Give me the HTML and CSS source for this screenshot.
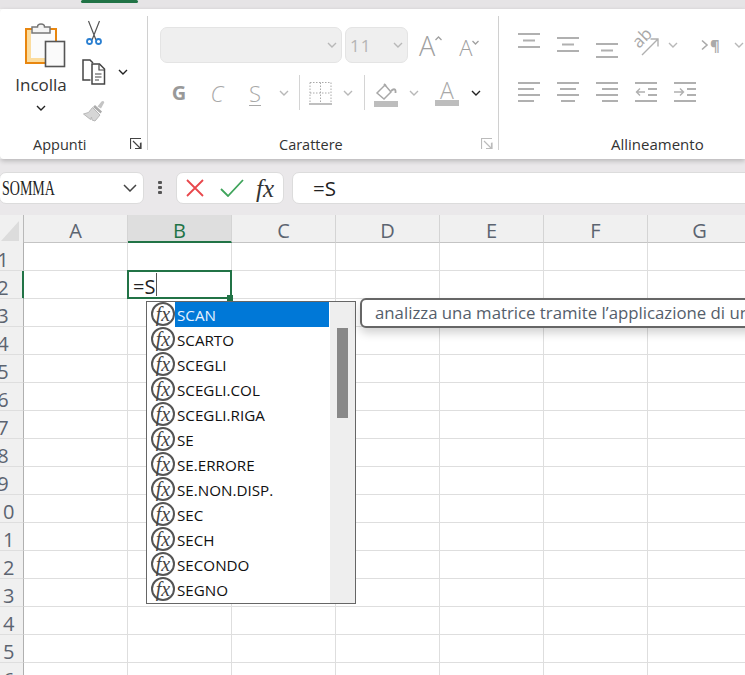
FILE: index.html
```html
<!DOCTYPE html>
<html lang="it">
<head>
  <meta charset="UTF-8" />
  <title>Excel - completamento formula</title>
  <link rel="stylesheet" href="styles.css">
</head>
<body>
  <svg class="defs" width="0" height="0">
    <symbol id="chev" viewBox="0 0 10 6"><path d="M1 1l4 4 4-4" fill="none" stroke="currentColor" stroke-width="1.4"/></symbol>
    <symbol id="launcher" viewBox="0 0 12 12"><path d="M.5 11V.5H11M3 3l7 7M5 10.5h6v-6M10.5 5v6" fill="none" stroke="currentColor" stroke-width="1.2"/></symbol>
  </svg>

  <div class="topband"><span class="tab-mark"></span></div>

  <section class="ribbon">
    <!-- Appunti -->
    <div class="group group-clip">
      <div class="group-body clip-body">
        <div class="paste">
          <svg class="paste-icon" width="44" height="48" viewBox="0 0 44 48">
            <rect x="3" y="9" width="30" height="34" fill="#fbfbfb" stroke="#e8860f" stroke-width="2"/>
            <rect x="4" y="10" width="4" height="32" fill="#fbdc9e"/>
            <rect x="4" y="38" width="20" height="4" fill="#fbdc9e"/>
            <path d="M9 13V7h5.500c0-4 7-4 7 0H27v6z" fill="#f4f4f4" stroke="#777" stroke-width="1.500"/>
            <rect x="22.500" y="21.500" width="19" height="25" fill="#fafafa" stroke="#555" stroke-width="1.600"/>
          </svg>
          <span class="paste-label">Incolla</span>
          <svg class="chev-svg dark" width="10" height="6"><use href="#chev"/></svg>
        </div>
        <div class="clip-tools">
          <svg width="24" height="26" viewBox="0 0 24 26">
            <path d="M6.500 1l7.500 19M17.500 1L10 20" fill="none" stroke="#555" stroke-width="1.200"/>
            <circle cx="7.500" cy="21.500" r="2.500" fill="#fff" stroke="#2a7fd1" stroke-width="1.800"/>
            <circle cx="16.500" cy="21.500" r="2.500" fill="#fff" stroke="#2a7fd1" stroke-width="1.800"/>
          </svg>
          <div class="copy-row">
            <svg width="24" height="26" viewBox="0 0 24 26">
              <path d="M8.500 21H1V1h7l3 3" fill="none" stroke="#444" stroke-width="1.500"/>
              <path d="M10 5h7.500l5 5v15H10z" fill="#fff" stroke="#444" stroke-width="1.500"/>
              <path d="M17 5.500V11h5M13 15h6.500M13 18h6.500M13 21h4" fill="none" stroke="#444" stroke-width="1.200"/>
            </svg>
            <svg class="chev-svg dark copy-chev" width="10" height="6"><use href="#chev"/></svg>
          </div>
          <svg width="24" height="26" viewBox="0 0 24 26">
            <path d="M15.500 8.500l4-5c1.500-1.500 3.500 0 2.500 1.500l-3 5.500z" fill="#c4c4c4"/>
            <path d="M13 7l7 6.500-1.500 2L11 9z" fill="#ababab"/>
            <path d="M10.500 9.500l7.500 7.500-5 6-3-1-.5-3-1 2.500-7-5.500 5-1.500z" fill="#d6d6d6" stroke="#b8b8b8"/>
          </svg>
        </div>
      </div>
      <div class="foot foot-clip">
        <span>Appunti</span>
        <svg class="launch" width="12" height="12"><use href="#launcher"/></svg>
      </div>
    </div>

    <!-- Carattere -->
    <div class="group group-font">
      <div class="group-body">
        <div class="font-row">
          <div class="select font-name"><svg class="chev-svg" width="10" height="6"><use href="#chev"/></svg></div>
          <div class="select font-size"><span>11</span><svg class="chev-svg" width="10" height="6"><use href="#chev"/></svg></div>
          <span class="grow big">A<svg width="7" height="5" viewBox="0 0 7 5"><path d="M.5 4l3-3 3 3" fill="none" stroke="currentColor" stroke-width="1.300"/></svg></span>
          <span class="grow small">A<svg width="7" height="5" viewBox="0 0 7 5"><path d="M.5 1l3 3 3-3" fill="none" stroke="currentColor" stroke-width="1.300"/></svg></span>
        </div>
        <div class="fmt-row">
          <span class="fmt bold">G</span>
          <span class="fmt italic">C</span>
          <span class="fmt under">S</span>
          <span class="chev-cell w20"><svg class="chev-svg" width="10" height="6"><use href="#chev"/></svg></span>
          <span class="vline first"></span>
          <svg class="border-icon" width="23" height="24" viewBox="0 0 23 24">
            <path d="M1 1.500h21M1 12h21M1 1.500v20M11.500 1.500v20M22 1.500v20" fill="none" stroke="#aaa" stroke-dasharray="1.500 1.500"/>
            <path d="M0 23h23" stroke="#aaa" stroke-width="1.600"/>
          </svg>
          <span class="chev-cell w32"><svg class="chev-svg" width="10" height="6"><use href="#chev"/></svg></span>
          <span class="vline"></span>
          <svg class="fill-icon" width="24" height="26" viewBox="0 0 24 26">
            <path d="M3 12l8-8 6 7-7 7z" fill="#fff" stroke="#a8a8a8" stroke-width="1.500"/>
            <path d="M10 3l2 2M17 10c3-3 5-2 4.500 2" fill="none" stroke="#a8a8a8" stroke-width="1.800"/>
            <rect y="20" width="24" height="6" fill="#bdbdbd"/>
          </svg>
          <span class="chev-cell w32"><svg class="chev-svg" width="10" height="6"><use href="#chev"/></svg></span>
          <span class="font-color"><span>A</span><i></i></span>
          <span class="chev-cell w34 dark"><svg class="chev-svg" width="10" height="6"><use href="#chev"/></svg></span>
        </div>
      </div>
      <div class="foot foot-font">
        <span>Carattere</span>
        <svg class="launch off" width="12" height="12"><use href="#launcher"/></svg>
      </div>
    </div>

    <!-- Allineamento -->
    <div class="group group-align">
      <div class="group-body">
        <div class="align-row top">
          <svg width="22" height="30" viewBox="0 0 22 30"><path d="M0 4h22M5 10.500h12M0 17h22" class="ln"/></svg>
          <svg width="22" height="30" viewBox="0 0 22 30"><path d="M0 8h22M5 14.500h12M0 21h22" class="ln"/></svg>
          <svg width="22" height="30" viewBox="0 0 22 30"><path d="M0 14h22M5 20.500h12M0 27h22" class="ln"/></svg>
          <svg class="orient" width="25" height="30" viewBox="0 0 25 30">
            <text x="5" y="19" transform="rotate(-45 5 19)" class="ab">ab</text>
            <path d="M8 25L24 9M16.500 9h7.500v7.500" class="ln thin"/>
          </svg>
          <span class="chev-cell w28"><svg class="chev-svg" width="10" height="6"><use href="#chev"/></svg></span>
          <svg class="pilcrow" width="22" height="30" viewBox="0 0 22 30">
            <path d="M1 10.500l5 4.500-5 4.500" fill="none" stroke="#aaa" stroke-width="1.600"/>
            <text x="9" y="21" class="para">¶</text>
          </svg>
          <span class="chev-cell w32"><svg class="chev-svg" width="10" height="6"><use href="#chev"/></svg></span>
        </div>
        <div class="align-row bottom">
          <svg width="22" height="35" viewBox="0 0 22 35"><path d="M0 8h22M0 14h16M0 20h22M0 26h16" class="ln"/></svg>
          <svg width="22" height="35" viewBox="0 0 22 35"><path d="M0 8h22M3 14h16M0 20h22M4 26h14" class="ln"/></svg>
          <svg width="22" height="35" viewBox="0 0 22 35"><path d="M0 8h22M6 14h16M0 20h22M6 26h16" class="ln"/></svg>
          <svg class="outdent" width="22" height="35" viewBox="0 0 22 35"><path d="M0 8h22M13 14h9M13 20h9M0 26h22" class="ln"/><path d="M10 17H1M5 13.500L1.500 17 5 20.500" class="ln thin"/></svg>
          <svg class="indent" width="22" height="35" viewBox="0 0 22 35"><path d="M0 8h22M13 14h9M13 20h9M0 26h22" class="ln"/><path d="M0 17h9M6 13.500L9.500 17 6 20.500" class="ln thin"/></svg>
        </div>
      </div>
      <div class="foot foot-align"><span>Allineamento</span></div>
    </div>
  </section>

  <section class="formula-bar">
    <div class="box name-box">
      <span class="name">SOMMA</span>
      <svg class="name-chev" width="14" height="8" viewBox="0 0 14 8"><path d="M1 1l6 6 6-6" fill="none" stroke="#444" stroke-width="1.500"/></svg>
    </div>
    <div class="dots"><i></i><i></i><i></i></div>
    <div class="box actions">
      <svg width="18" height="18" viewBox="0 0 18 18"><path d="M1 1l16 16M17 1L1 17" stroke="#e8474c" stroke-width="1.800"/></svg>
      <svg class="ok" width="24" height="18" viewBox="0 0 24 18"><path d="M1 10l7 7L23 1" fill="none" stroke="#3fa45b" stroke-width="1.800"/></svg>
      <span class="fx-btn">fx</span>
    </div>
    <div class="box formula-input">=S</div>
  </section>

  <section class="sheet">
    <div class="col-heads">
      <div class="corner"><svg width="20" height="22" viewBox="0 0 20 22"><path d="M19 1v20H1z" fill="#dcdcdc"/></svg></div>
      <div class="col">A</div>
      <div class="col active">B</div>
      <div class="col">C</div>
      <div class="col">D</div>
      <div class="col">E</div>
      <div class="col">F</div>
      <div class="col">G</div>
    </div>
    <div class="sheet-body">
      <div class="row-heads">
        <div class="row">1</div>
        <div class="row active">2</div>
        <div class="row">3</div>
        <div class="row">4</div>
        <div class="row">5</div>
        <div class="row">6</div>
        <div class="row">7</div>
        <div class="row">8</div>
        <div class="row">9</div>
        <div class="row">10</div>
        <div class="row">11</div>
        <div class="row">12</div>
        <div class="row">13</div>
        <div class="row">14</div>
        <div class="row">15</div>
        <div class="row">16</div>
      </div>
      <div class="cells">
        <div class="selection">=S<span class="caret"></span><i class="handle"></i></div>

        <div class="dropdown">
          <ul class="fn-list">
            <li class="picked"><span class="fn-icon">fx</span><span class="fn-name">SCAN</span></li>
            <li><span class="fn-icon">fx</span><span class="fn-name">SCARTO</span></li>
            <li><span class="fn-icon">fx</span><span class="fn-name">SCEGLI</span></li>
            <li><span class="fn-icon">fx</span><span class="fn-name">SCEGLI.COL</span></li>
            <li><span class="fn-icon">fx</span><span class="fn-name">SCEGLI.RIGA</span></li>
            <li><span class="fn-icon">fx</span><span class="fn-name">SE</span></li>
            <li><span class="fn-icon">fx</span><span class="fn-name">SE.ERRORE</span></li>
            <li><span class="fn-icon">fx</span><span class="fn-name">SE.NON.DISP.</span></li>
            <li><span class="fn-icon">fx</span><span class="fn-name">SEC</span></li>
            <li><span class="fn-icon">fx</span><span class="fn-name">SECH</span></li>
            <li><span class="fn-icon">fx</span><span class="fn-name">SECONDO</span></li>
            <li><span class="fn-icon">fx</span><span class="fn-name">SEGNO</span></li>
          </ul>
          <div class="scrollbar"><div class="thumb"></div></div>
        </div>

        <div class="tip">analizza una matrice tramite l’applicazione di una funzione LAMBDA</div>
      </div>
    </div>
  </section>
</body>
</html>
```

FILE: styles.css
```css
:root {
  --green: #217346;
  --chrome: #eae8ea;
  --head: #f0f0f0;
  --grid: #dedede;
  --off: #a8a8a8;
  --label: #5c6470;
}

* { box-sizing: border-box; }

html, body { height: 100%; }

body {
  margin: 0;
  width: 745px;
  height: 675px;
  overflow: hidden;
  background: #fff;
  font-family: "Open Sans", "Noto Sans", sans-serif;
  color: #333;
}

.defs { position: absolute; }

svg { display: block; flex: none; }

.topband {
  height: 9px;
  background: #e6e4e6;
}

.tab-mark {
  display: block;
  width: 57px;
  height: 3px;
  margin-left: 81px;
  background: var(--green);
  border-radius: 2px;
}

/* ribbon */
.ribbon {
  display: flex;
  height: 150px;
  padding-top: 7px;
  background: #fff;
  border-radius: 4px 0 0 4px;
  box-shadow: 0 2px 5px rgba(0, 0, 0, 0.22);
  position: relative;
  overflow: hidden;
}

.group {
  display: flex;
  flex-direction: column;
  height: 134px;
  flex: none;
}

.group-clip { width: 148px; border-right: 1px solid #d0d0d0; }
.group-font { width: 351px; border-right: 1px solid #d0d0d0; }
.group-align { width: 246px; }

.group-body { flex: 1; min-height: 0; }

.foot {
  display: flex;
  align-items: center;
  height: 20px;
  margin-bottom: -4px;
  font-size: 14.500px;
  color: #333;
}

.foot-clip { padding: 0 5px 0 33px; }
.foot-font { padding: 0 5px 0 131px; }
.foot-align { padding-left: 112px; font-size: 15px; }

.launch { margin-left: auto; color: #444; }
.launch.off { color: #bbb; }

.chev-svg { color: #b8b8b8; }
.dark .chev-svg, .chev-svg.dark { color: #222; }

.chev-cell { display: flex; justify-content: center; flex: none; }
.w20 { width: 20px; }
.w28 { width: 28px; }
.w32 { width: 32px; }
.w34 { width: 34px; }

/* appunti */
.clip-body { display: flex; padding-top: 4px; }

.paste {
  width: 82px;
  display: flex;
  flex-direction: column;
  align-items: center;
}

.paste-icon { margin-left: 8px; }

.paste-label {
  margin-top: 6px;
  font-size: 17px;
  line-height: 22px;
  color: #333;
}

.paste .chev-svg { margin-top: 9px; }

.clip-tools {
  display: flex;
  flex-direction: column;
  gap: 13px;
}

.copy-row { display: flex; align-items: center; }
.copy-chev { margin: 0 0 0 12px; }

/* carattere */
.group-font .group-body { padding: 11px 0 0 12px; }

.font-row { display: flex; align-items: center; height: 36px; }

.select {
  display: flex;
  align-items: center;
  height: 36px;
  background: #efefef;
  border: 1px solid #e4e4e4;
  border-radius: 7px;
}

.select .chev-svg { margin-left: auto; margin-right: 4px; }
.font-name { width: 182px; }
.font-size { width: 63px; margin-left: 3px; padding-left: 4px; }
.font-size span { font-size: 17px; color: #b5b5b5; letter-spacing: 1px; }

.grow {
  display: flex;
  align-items: flex-start;
  color: #a0a0a0;
  line-height: 1;
  font-weight: 300;
}

.grow svg { margin-top: 4px; }
.grow.big { font-size: 27px; margin-left: 11px; }
.grow.small { font-size: 22px; margin-left: 17px; padding-top: 3px; }

.fmt-row { display: flex; align-items: center; height: 35px; margin-top: 12px; }

.fmt {
  width: 38px;
  text-align: center;
  font-size: 22px;
  line-height: 24px;
  color: var(--off);
}

.fmt.bold { font-weight: 700; color: #999; font-size: 20px; }
.fmt.italic { font-style: italic; font-weight: 300; }
.fmt.under { text-decoration: underline; text-decoration-thickness: 1px; text-underline-offset: 3px; font-weight: 300; }

.vline { width: 1px; height: 35px; background: #d4d4d4; flex: none; }
.vline.first { margin-left: 5px; }

.border-icon { margin-left: 9px; }
.fill-icon { margin-left: 9px; margin-top: 2px; }

.font-color {
  width: 24px;
  margin-left: 5px;
  display: flex;
  flex-direction: column;
  align-items: center;
  flex: none;
  font-size: 23px;
  line-height: 20px;
  color: #a8a8a8;
  font-weight: 300;
  padding-top: 1px;
}

.font-color i { display: block; width: 24px; height: 6px; background: #bdbdbd; }

/* allineamento */
.group-align .group-body { padding: 11px 0 0 19px; }

.align-row { display: flex; }
.align-row.top { height: 36px; padding-top: 3px; gap: 17px; }
.align-row.top .orient { margin-left: -1px; overflow: visible; }
.align-row.top .chev-cell { margin-left: -17px; padding-top: 12px; }
.align-row.top .pilcrow { margin-left: -3px; }
.align-row.bottom { height: 35px; margin-top: 12px; gap: 17px; }

.ln { fill: none; stroke: #b0b0b0; stroke-width: 2; }
.ln.thin { stroke-width: 1.400; }

.ab { font-size: 17px; fill: #a8a8a8; font-family: "Open Sans", sans-serif; }
.para { font-size: 15px; fill: #aaa; font-weight: 700; font-family: "Open Sans", sans-serif; }

/* formula bar */
.formula-bar {
  display: flex;
  align-items: flex-start;
  height: 56px;
  padding-top: 13px;
  background: var(--chrome);
}

.box {
  height: 32px;
  background: #fff;
  border: 1px solid #dcdcdc;
  border-radius: 7px;
  display: flex;
  align-items: center;
  flex: none;
}

.name-box {
  width: 145px;
  margin-left: -1px;
  padding-left: 2px;
}

.name {
  display: inline-block;
  width: 0;
  font-family: "Liberation Serif", serif;
  font-size: 20px;
  color: #222;
  transform: scaleX(0.7);
  transform-origin: left center;
}

.name-chev { margin-left: auto; margin-right: 6px; }

.dots {
  width: 8px;
  margin: 9px 0 0 12px;
  display: flex;
  flex-direction: column;
  align-items: center;
  gap: 2px;
  flex: none;
}

.dots i { width: 4px; height: 3px; background: #555; border-radius: 1px; }

.actions {
  width: 108px;
  margin-left: 12px;
  padding-left: 9px;
}

.ok { margin-left: 16px; }

.fx-btn {
  margin-left: 12px;
  font-family: "Liberation Serif", serif;
  font-style: italic;
  font-size: 25px;
  line-height: 1;
  color: #333;
}

.formula-input {
  flex: 1;
  margin: 0 -10px 0 8px;
  padding-left: 20px;
  font-size: 20.500px;
  color: #222;
}

/* sheet */
.sheet { height: 460px; overflow: hidden; }

.col-heads { display: flex; height: 28px; background: var(--head); }

.corner {
  width: 24px;
  flex: none;
  padding-top: 5px;
  border-right: 1px solid #b9b9b9;
}

.col {
  width: 104px;
  flex: none;
  text-align: center;
  font-size: 20px;
  line-height: 31px;
  color: var(--label);
  border-right: 1px solid #d4d4d4;
  border-bottom: 1px solid #c4c4c4;
}

.col.active {
  background: #dedede;
  color: var(--green);
  border-bottom: 2px solid var(--green);
}

.sheet-body { display: flex; }

.row-heads { width: 41px; margin-left: -17px; flex: none; }

.row {
  height: 28px;
  background: var(--head);
  border-right: 1px solid #b0b0b0;
  border-bottom: 1px solid var(--grid);
  text-align: center;
  font-size: 20px;
  line-height: 34px;
  color: var(--label);
}

.row.active {
  border-right-color: var(--green);
  box-shadow: inset -1px 0 0 var(--green);
}

.cells {
  flex: 1;
  position: relative;
  height: 432px;
  background-color: #fff;
  background-image:
    linear-gradient(to right, transparent 103px, var(--grid) 103px),
    linear-gradient(to bottom, transparent 27px, var(--grid) 27px);
  background-size: 104px 100%, 100% 28px;
}

.selection {
  position: absolute;
  left: 103px;
  top: 27px;
  width: 105px;
  height: 29px;
  padding-left: 4px;
  background: #fff;
  border: 2px solid var(--green);
  font-size: 20px;
  line-height: 29px;
  color: #222;
  display: flex;
}

.caret { width: 1px; height: 23px; margin: 1px 0 0 1px; background: #555; }

.handle {
  position: absolute;
  right: -3px;
  bottom: -4px;
  width: 6px;
  height: 6px;
  background: var(--green);
}

.dropdown {
  position: absolute;
  left: 122px;
  top: 58px;
  width: 210px;
  height: 303px;
  display: flex;
  background: #fff;
  border: 1px solid #666;
}

.fn-list {
  width: 183px;
  margin: 0;
  padding: 0;
  list-style: none;
  flex: none;
}

.fn-list li {
  display: flex;
  height: 25px;
  padding-left: 4px;
  align-items: stretch;
  font-size: 15.200px;
  color: #111;
}

.fn-icon {
  width: 24px;
  height: 24px;
  border: 2px solid #555;
  border-radius: 50%;
  background: #fff;
  font-family: "Liberation Serif", serif;
  font-style: italic;
  font-size: 20px;
  line-height: 20px;
  text-align: center;
  color: #444;
  flex: none;
}

.fn-name {
  flex: 1;
  margin-right: 1px;
  padding-left: 2px;
  line-height: 27px;
}

.picked .fn-name { background: #0078d7; color: #e8f2ff; }

.scrollbar { flex: 1; background: #eeeeee; padding: 26px 0 0 7px; }
.thumb { width: 11px; height: 90px; background: #888; }

.tip {
  position: absolute;
  left: 336px;
  top: 55px;
  width: 520px;
  height: 30px;
  padding-left: 13px;
  background: #fff;
  border: 2px solid #666;
  border-radius: 6px;
  box-shadow: 0 5px 10px rgba(0, 0, 0, 0.18);
  font-size: 16.800px;
  line-height: 25px;
  color: #555e6b;
  white-space: nowrap;
}
```
